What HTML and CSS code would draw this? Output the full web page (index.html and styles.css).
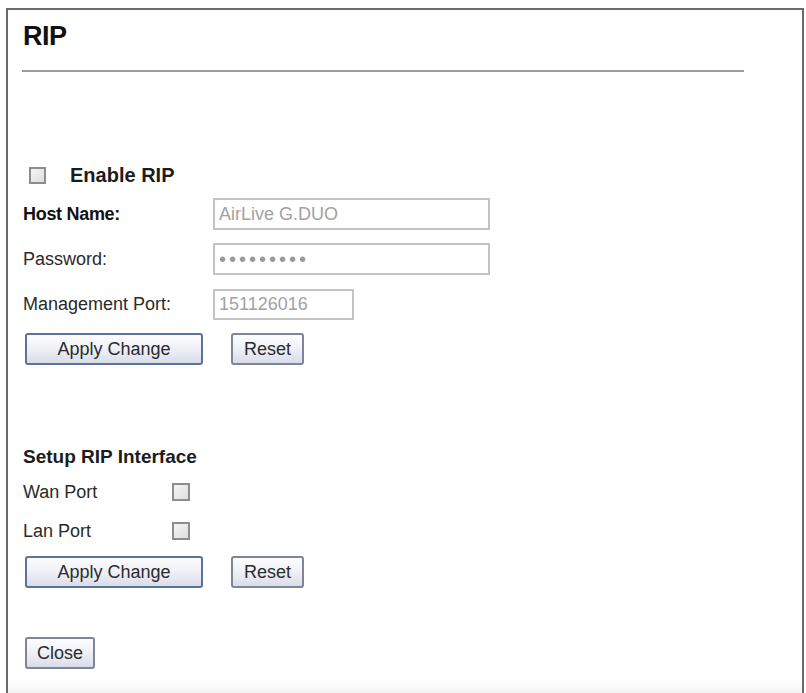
FILE: index.html
```html
<!DOCTYPE html>
<html lang="en">
<head>
    <meta charset="UTF-8">
    <meta name="viewport" content="width=device-width, initial-scale=1.0">
    <title>RIP</title>
    <link rel="stylesheet" href="styles.css">
</head>
<body>

<div class="frame">
    <h1 class="title">RIP</h1>
    <hr class="rule">

    <form class="rip-form" onsubmit="return false">
        <label class="enable">
            <input type="checkbox" class="check" name="rip_enable">
            <span>Enable RIP</span>
        </label>

        <div class="fields">
            <label class="field-label strong" for="host">Host Name:</label>
            <input class="text wide" id="host" type="text" value="AirLive G.DUO" readonly>

            <label class="field-label" for="pass">Password:</label>
            <input class="text wide dots" id="pass" type="password" value="123456789" readonly>

            <label class="field-label" for="port">Management Port:</label>
            <input class="text short" id="port" type="text" value="151126016" readonly>
        </div>

        <div class="actions">
            <button class="btn apply" type="submit">Apply Change</button>
            <button class="btn" type="reset">Reset</button>
        </div>
    </form>

    <form class="iface-form" onsubmit="return false">
        <h2 class="section-title">Setup RIP Interface</h2>

        <div class="ports">
            <label class="port-label" for="wan">Wan Port</label>
            <input type="checkbox" class="check port-check" id="wan">

            <label class="port-label" for="lan">Lan Port</label>
            <input type="checkbox" class="check port-check" id="lan">
        </div>

        <div class="actions">
            <button class="btn apply" type="submit">Apply Change</button>
            <button class="btn" type="reset">Reset</button>
        </div>
    </form>

    <div class="actions close-row">
        <button class="btn" type="button" onclick="window.close()">Close</button>
    </div>
</div>

</body>
</html>
```

FILE: styles.css
```css
        html, body {
            margin: 0;
            padding: 0;
            height: 100%;
            overflow: hidden;
        }
        body {
            font-family: "Liberation Sans", Arial, Helvetica, sans-serif;
            font-size: 18px;
            color: #222;
            background: #fff;
        }
        .frame {
            box-sizing: border-box;
            height: calc(100% - 8px);
            margin: 8px 2px 0 6px;
            padding: 0 0 0 15px;
            border: 2px solid #6b6b6b;
            border-bottom: none;
            background: linear-gradient(to bottom, #fff calc(100% - 14px), #f4f4f4);
        }
        .title {
            margin: 0;
            padding-top: 10px;
            font-size: 27px;
            line-height: 32px;
            font-weight: bold;
            color: #111;
            letter-spacing: -0.5px;
        }
        .rule {
            width: 722px;
            height: 0;
            margin: 18px 0 0 -1px;
            border: none;
            border-top: 2px solid #9c9c9c;
        }

        /* checkbox look of the old router pages */
        .check {
            -webkit-appearance: none;
            appearance: none;
            box-sizing: border-box;
            width: 17px;
            height: 17px;
            margin: 0;
            border: 2px solid #8d8d8d;
            background: linear-gradient(135deg, #f4f4f4, #dedede);
        }
        .enable {
            display: flex;
            align-items: center;
            height: 30px;
            margin-top: 88px;
            font-size: 20px;
            font-weight: bold;
            color: #1c1c1c;
        }
        .enable .check {
            margin-left: 6px;
            margin-right: 24px;
        }

        .fields {
            display: grid;
            grid-template-columns: 190px auto;
            grid-auto-rows: 32px;
            row-gap: 13px;
            margin-top: 8px;
            align-items: center;
            justify-items: start;
        }
        .field-label { color: #2a2a2a; }
        .strong { font-weight: bold; color: #111; letter-spacing: -0.3px; }
        .text {
            box-sizing: border-box;
            height: 32px;
            padding: 0 4px;
            border: 2px solid #c4c4c4;
            font-family: inherit;
            font-size: 18px;
            color: #a2a2a2;
            background: #fff;
            outline: none;
        }
        .wide { width: 277px; }
        .short { width: 141px; height: 31px; }
        .dots {
            letter-spacing: 3px;
            font-size: 20px;
            color: #999;
        }

        .actions {
            display: flex;
            gap: 28px;
            margin-top: 13px;
            padding-left: 2px;
        }
        .btn {
            box-sizing: border-box;
            height: 32px;
            padding: 0 10px;
            font-family: inherit;
            font-size: 18px;
            color: #2b2b2b;
            border: 2px solid #7d8598;
            border-radius: 3px;
            background: linear-gradient(to bottom, #fdfdff 0%, #eef0f6 50%, #d9dde9 100%);
            cursor: pointer;
        }
        .btn.apply {
            width: 178px;
            border-color: #5b7299;
        }
        .actions .btn:not(.apply) { min-width: 70px; }
        .actions .btn[type="reset"] { width: 73px; }

        .section-title {
            margin: 80px 0 0;
            font-size: 19px;
            line-height: 24px;
            font-weight: bold;
            color: #1c1c1c;
        }
        .ports {
            display: grid;
            grid-template-columns: 149px auto;
            grid-auto-rows: 30px;
            row-gap: 9px;
            margin-top: 8px;
            align-items: center;
            justify-items: start;
        }
        .port-label { color: #2a2a2a; }
        .port-check {
            width: 18px;
            height: 18px;
        }
        .iface-form .actions { margin-top: 10px; }
        .close-row { margin-top: 49px; }
```
